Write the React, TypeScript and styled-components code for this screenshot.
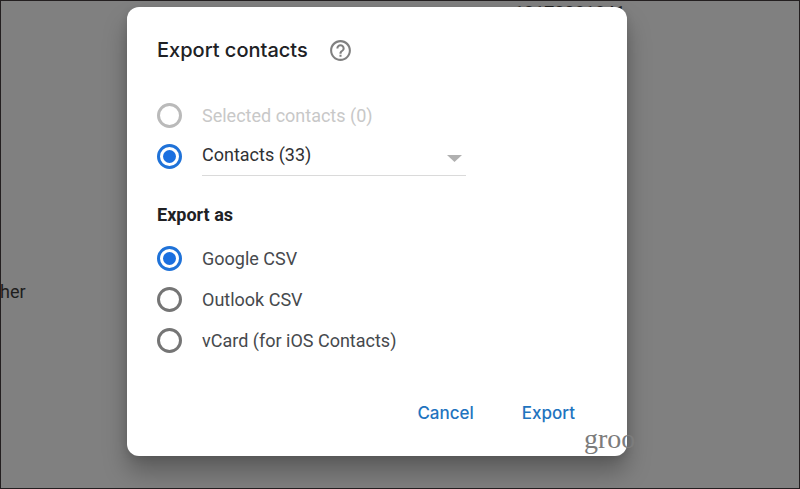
import React, { useState } from "react";
import styled, { createGlobalStyle } from "styled-components";

const GlobalStyle = createGlobalStyle`
  *, *::before, *::after { box-sizing: border-box; }
  body { margin: 0; font-family: Roboto, "Liberation Sans", sans-serif; }
`;

const Page = styled.div`
  position: relative;
  min-height: 100vh;
  padding: 6px 172px 30px 126px;
  overflow: hidden;
  border: 1px solid #231f20;
  background: #808080;
`;

const BackdropText = styled.span`
  position: absolute;
  font-size: 18px;
  line-height: 24px;
  color: #1e1e1e;
`;

const PhoneText = styled(BackdropText)`
  top: 0;
  left: 513px;
`;

const LabelText = styled(BackdropText)`
  top: 279px;
  left: -1px;
`;

const Watermark = styled.span`
  position: absolute;
  top: 423px;
  left: 583px;
  font-family: "Liberation Serif", serif;
  font-size: 28px;
  line-height: 30px;
  color: #7c7c7c;
`;

const Dialog = styled.form`
  position: relative;
  display: flex;
  flex-direction: column;
  max-width: 500px;
  padding: 28px 30px;
  border-radius: 12px;
  background: #fff;
  box-shadow: 0 16px 24px rgba(0, 0, 0, 0.28), 0 2px 8px rgba(0, 0, 0, 0.12);
`;

const Header = styled.header`
  display: flex;
  align-items: center;
  gap: 20px;
  height: 30px;
`;

const Title = styled.h1`
  margin: 0;
  font-family: Inter, sans-serif;
  font-size: 20px;
  font-weight: 500;
  line-height: 30px;
  color: #202124;
`;

const HelpButton = styled.button`
  display: flex;
  padding: 0;
  border: 0;
  background: none;
`;

const Group = styled.fieldset`
  display: grid;
  min-width: 0;
  margin: 0;
  padding: 0;
  border: 0;
`;

const SourceGroup = styled(Group)`
  margin-top: 30px;
`;

const FormatGroup = styled(Group)`
  margin-top: 26px;
`;

const Legend = styled.legend`
  margin-bottom: 11px;
  padding: 0;
  font-size: 18px;
  font-weight: 700;
  line-height: 24px;
  color: #202124;
`;

const Row = styled.div`
  display: flex;
  align-items: center;
  gap: 20px;
  height: 41px;
`;

const Radio = styled.input`
  flex: none;
  display: grid;
  place-content: center;
  appearance: none;
  width: 25px;
  height: 25px;
  margin: 0;
  border: 3px solid #757575;
  border-radius: 50%;

  &::before {
    content: "";
    width: 13px;
    height: 13px;
    border-radius: 50%;
  }
  &:checked { border-color: #1f72d8; }
  &:checked::before { background: #1a6fe0; }
  &:disabled { border-color: #bababa; }
`;

const OptionLabel = styled.label<{ $muted?: boolean }>`
  font-size: 18px;
  line-height: 24px;
  color: ${({ $muted }) => ($muted ? "#c8c8c8" : "#46494d")};
`;

const SelectField = styled.div`
  display: flex;
  align-items: center;
  flex: 0 1 264px;
  height: 38px;
  border-bottom: 1px solid #dadada;
`;

const Select = styled.select`
  flex: 1;
  min-width: 0;
  margin: 0;
  padding: 0 0 2px;
  appearance: none;
  border: 0;
  background: none;
  font: 18px/24px Roboto, sans-serif;
  color: #303134;
`;

const Arrow = styled.svg`
  flex: none;
  margin: 4px 4px 0 0;
  pointer-events: none;
`;

const Actions = styled.footer`
  display: flex;
  justify-content: flex-end;
  gap: 48px;
  margin-top: 37px;
  padding-right: 22px;
`;

const ActionButton = styled.button`
  padding: 0;
  border: 0;
  background: none;
  font-family: Inter, sans-serif;
  font-size: 17px;
  font-weight: 500;
  line-height: 30px;
  color: #1f74bf;
`;

const formats = ["Google CSV", "Outlook CSV", "vCard (for iOS Contacts)"];

export default function App() {
  const [format, setFormat] = useState(formats[0]);

  return (
    <>
      <GlobalStyle />
      <Page>
        <PhoneText>12172081841</PhoneText>
        <LabelText>her</LabelText>
        <Dialog onSubmit={(event: React.FormEvent) => event.preventDefault()}>
          <Header>
            <Title>Export contacts</Title>
            <HelpButton type="button" aria-label="Help">
              <svg width="25" height="25" viewBox="0 0 24 24" fill="#808080">
                <path d="M11 18h2v-2h-2v2zm1-16C6.480 2 2 6.480 2 12s4.480 10 10 10 10-4.480 10-10S17.520 2 12 2zm0 18c-4.410 0-8-3.590-8-8s3.590-8 8-8 8 3.590 8 8-3.590 8-8 8zm0-14c-2.210 0-4 1.790-4 4h2c0-1.100.9-2 2-2s2 .9 2 2c0 2-3 1.750-3 5h2c0-2.250 3-2.500 3-5 0-2.210-1.790-4-4-4z" />
              </svg>
            </HelpButton>
          </Header>
          <SourceGroup aria-label="Contacts to export">
            <Row>
              <Radio type="radio" name="source" id="selected" disabled />
              <OptionLabel htmlFor="selected" $muted>Selected contacts (0)</OptionLabel>
            </Row>
            <Row>
              <Radio type="radio" name="source" aria-label="Contacts" defaultChecked />
              <SelectField>
                <Select aria-label="Contacts to export">
                  <option>Contacts (33)</option>
                </Select>
                <Arrow width="15" height="7" viewBox="0 0 15 7" aria-hidden="true">
                  <path d="M0 0h15L7.500 7z" fill="#b0b0b0" />
                </Arrow>
              </SelectField>
            </Row>
          </SourceGroup>
          <FormatGroup>
            <Legend>Export as</Legend>
            {formats.map((name, index) => (
              <Row key={name}>
                <Radio
                  type="radio"
                  name="format"
                  id={`format-${index}`}
                  checked={format === name}
                  onChange={() => setFormat(name)}
                />
                <OptionLabel htmlFor={`format-${index}`}>{name}</OptionLabel>
              </Row>
            ))}
          </FormatGroup>
          <Actions>
            <ActionButton type="button">Cancel</ActionButton>
            <ActionButton type="submit">Export</ActionButton>
          </Actions>
        </Dialog>
        <Watermark>groo</Watermark>
      </Page>
    </>
  );
}
